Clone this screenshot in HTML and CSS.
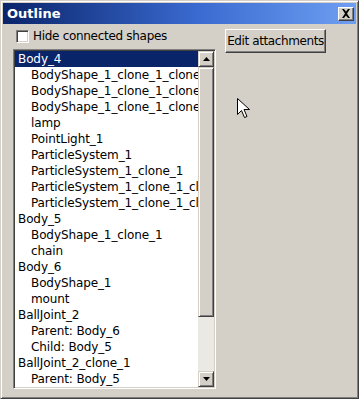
FILE: index.html
```html
<!DOCTYPE html>
<html>
<head>
<meta charset="utf-8">
<link rel="stylesheet" href="styles.css">
</head>
<body>
<div class="window">
  <div class="titlebar">
    <span class="title">Outline</span>
    <span class="close"><svg width="10" height="9" viewBox="0 0 10 9"><path d="M1 0h2l2 2.5 2-2.5h2l-3 4.5 3 4.5h-2l-2-2.5-2 2.5h-2l3-4.5z" fill="#000"/></svg></span>
  </div>
  <div class="content">
    <div class="left">
      <label class="check"><span class="box"></span><span>Hide connected shapes</span></label>
      <div class="listbox">
        <ul class="list">
          <li class="sel">Body_4</li>
          <li class="child">BodyShape_1_clone_1_clone_1</li>
          <li class="child">BodyShape_1_clone_1_clone_2</li>
          <li class="child">BodyShape_1_clone_1_clone_3</li>
          <li class="child">lamp</li>
          <li class="child">PointLight_1</li>
          <li class="child">ParticleSystem_1</li>
          <li class="child">ParticleSystem_1_clone_1</li>
          <li class="child">ParticleSystem_1_clone_1_clone_1</li>
          <li class="child">ParticleSystem_1_clone_1_clone_2</li>
          <li>Body_5</li>
          <li class="child">BodyShape_1_clone_1</li>
          <li class="child">chain</li>
          <li>Body_6</li>
          <li class="child">BodyShape_1</li>
          <li class="child">mount</li>
          <li>BallJoint_2</li>
          <li class="child">Parent: Body_6</li>
          <li class="child">Child: Body_5</li>
          <li>BallJoint_2_clone_1</li>
          <li class="child">Parent: Body_5</li>
          <li class="sel">Child: Body_4</li>
        </ul>
        <div class="scrollbar">
          <div class="sbtn"><svg width="7" height="4" viewBox="0 0 7 4"><path d="M3.5 0L7 4H0z" fill="#000"/></svg></div>
          <div class="track"><div class="thumb"></div></div>
          <div class="sbtn"><svg width="7" height="4" viewBox="0 0 7 4"><path d="M0 0h7L3.5 4z" fill="#000"/></svg></div>
        </div>
      </div>
    </div>
    <div class="right">
      <button class="edit">Edit attachments</button>
    </div>
  </div>
  <svg class="cursor" width="13" height="22" viewBox="0 0 13 22"><path d="M0.5 0.5v16l4-4 3 7 2.5-1-3-7h5.5z" fill="#fff" stroke="#000" stroke-width="1"/></svg>
</div>
</body>
</html>
```
FILE: styles.css
```css
* { box-sizing: border-box; }
html, body { margin: 0; padding: 0; }
body {
  width: 359px;
  height: 399px;
  overflow: hidden;
  font-family: "DejaVu Sans", Verdana, sans-serif;
  font-size: 12px;
  letter-spacing: -0.3px;
  color: #000;
  background: #d4d0c8;
}
.window {
  position: relative;
  width: 359px;
  height: 399px;
  background: #d4d0c8;
  border: 1px solid;
  border-color: #d4d0c8 #404040 #404040 #d4d0c8;
  box-shadow: inset 1px 1px #fff, inset -1px -1px #808080;
  padding: 2px 2px 0 2px;
}
.titlebar {
  height: 21px;
  display: flex;
  align-items: center;
  justify-content: space-between;
  padding: 0 2px 0 4px;
  background: linear-gradient(to right, #0a246a 0%, #3a6ad0 55%, #6e9ff2 100%);
}
.title {
  color: #fff;
  font-weight: bold;
  font-size: 13px;
  letter-spacing: 0;
}
.close {
  width: 16px;
  height: 14px;
  display: flex;
  align-items: center;
  justify-content: center;
  background: #d4d0c8;
  border: 1px solid;
  border-color: #fff #404040 #404040 #fff;
  box-shadow: inset -1px -1px #808080;
}
.content {
  display: flex;
  padding: 5px 0 0 10px;
  gap: 9px;
}
.left {
  display: flex;
  flex-direction: column;
  gap: 6px;
}
.check {
  display: flex;
  align-items: center;
  gap: 4px;
  height: 14px;
  padding-left: 3px;
  white-space: nowrap;
}
.box {
  width: 13px;
  height: 13px;
  background: #fff;
  border: 1px solid;
  border-color: #808080 #fff #fff #808080;
  box-shadow: inset 1px 1px #404040, inset -1px -1px #d4d0c8;
}
.listbox {
  display: flex;
  width: 203px;
  height: 340px;
  background: #fff;
  border: 1px solid;
  border-color: #808080 #fff #fff #808080;
  box-shadow: inset 1px 1px #404040, inset -1px -1px #d4d0c8;
  padding: 1px;
  overflow: hidden;
}
.list {
  list-style: none;
  margin: 0;
  padding: 0;
  flex: 1;
  overflow: hidden;
  height: 336px;
  letter-spacing: -0.1px;
}
.list li {
  height: 16px;
  line-height: 16px;
  padding-left: 3px;
  white-space: nowrap;
  overflow: hidden;
}
.list li.child { padding-left: 16px; }
.list li.sel { background: #0a246a; color: #fff; }
.scrollbar {
  width: 16px;
  display: flex;
  flex-direction: column;
  flex: none;
}
.sbtn {
  height: 16px;
  flex: none;
  display: flex;
  align-items: center;
  justify-content: center;
  background: #d4d0c8;
  border: 1px solid;
  border-color: #d4d0c8 #404040 #404040 #d4d0c8;
  box-shadow: inset 1px 1px #fff, inset -1px -1px #808080;
}
.track {
  flex: 1;
  background: #ebe9e4;
}
.thumb {
  height: 250px;
  background: #d4d0c8;
  border: 1px solid;
  border-color: #d4d0c8 #404040 #404040 #d4d0c8;
  box-shadow: inset 1px 1px #fff, inset -1px -1px #808080;
}
.edit {
  width: 101px;
  height: 24px;
  padding: 0;
  white-space: nowrap;
  font-family: inherit;
  font-size: 12px;
  letter-spacing: -0.4px;
  color: #000;
  background: #d4d0c8;
  border: 1px solid;
  border-color: #fff #404040 #404040 #fff;
  box-shadow: inset -1px -1px #808080;
}
.cursor {
  position: absolute;
  left: 236px;
  top: 97px;
}
```
